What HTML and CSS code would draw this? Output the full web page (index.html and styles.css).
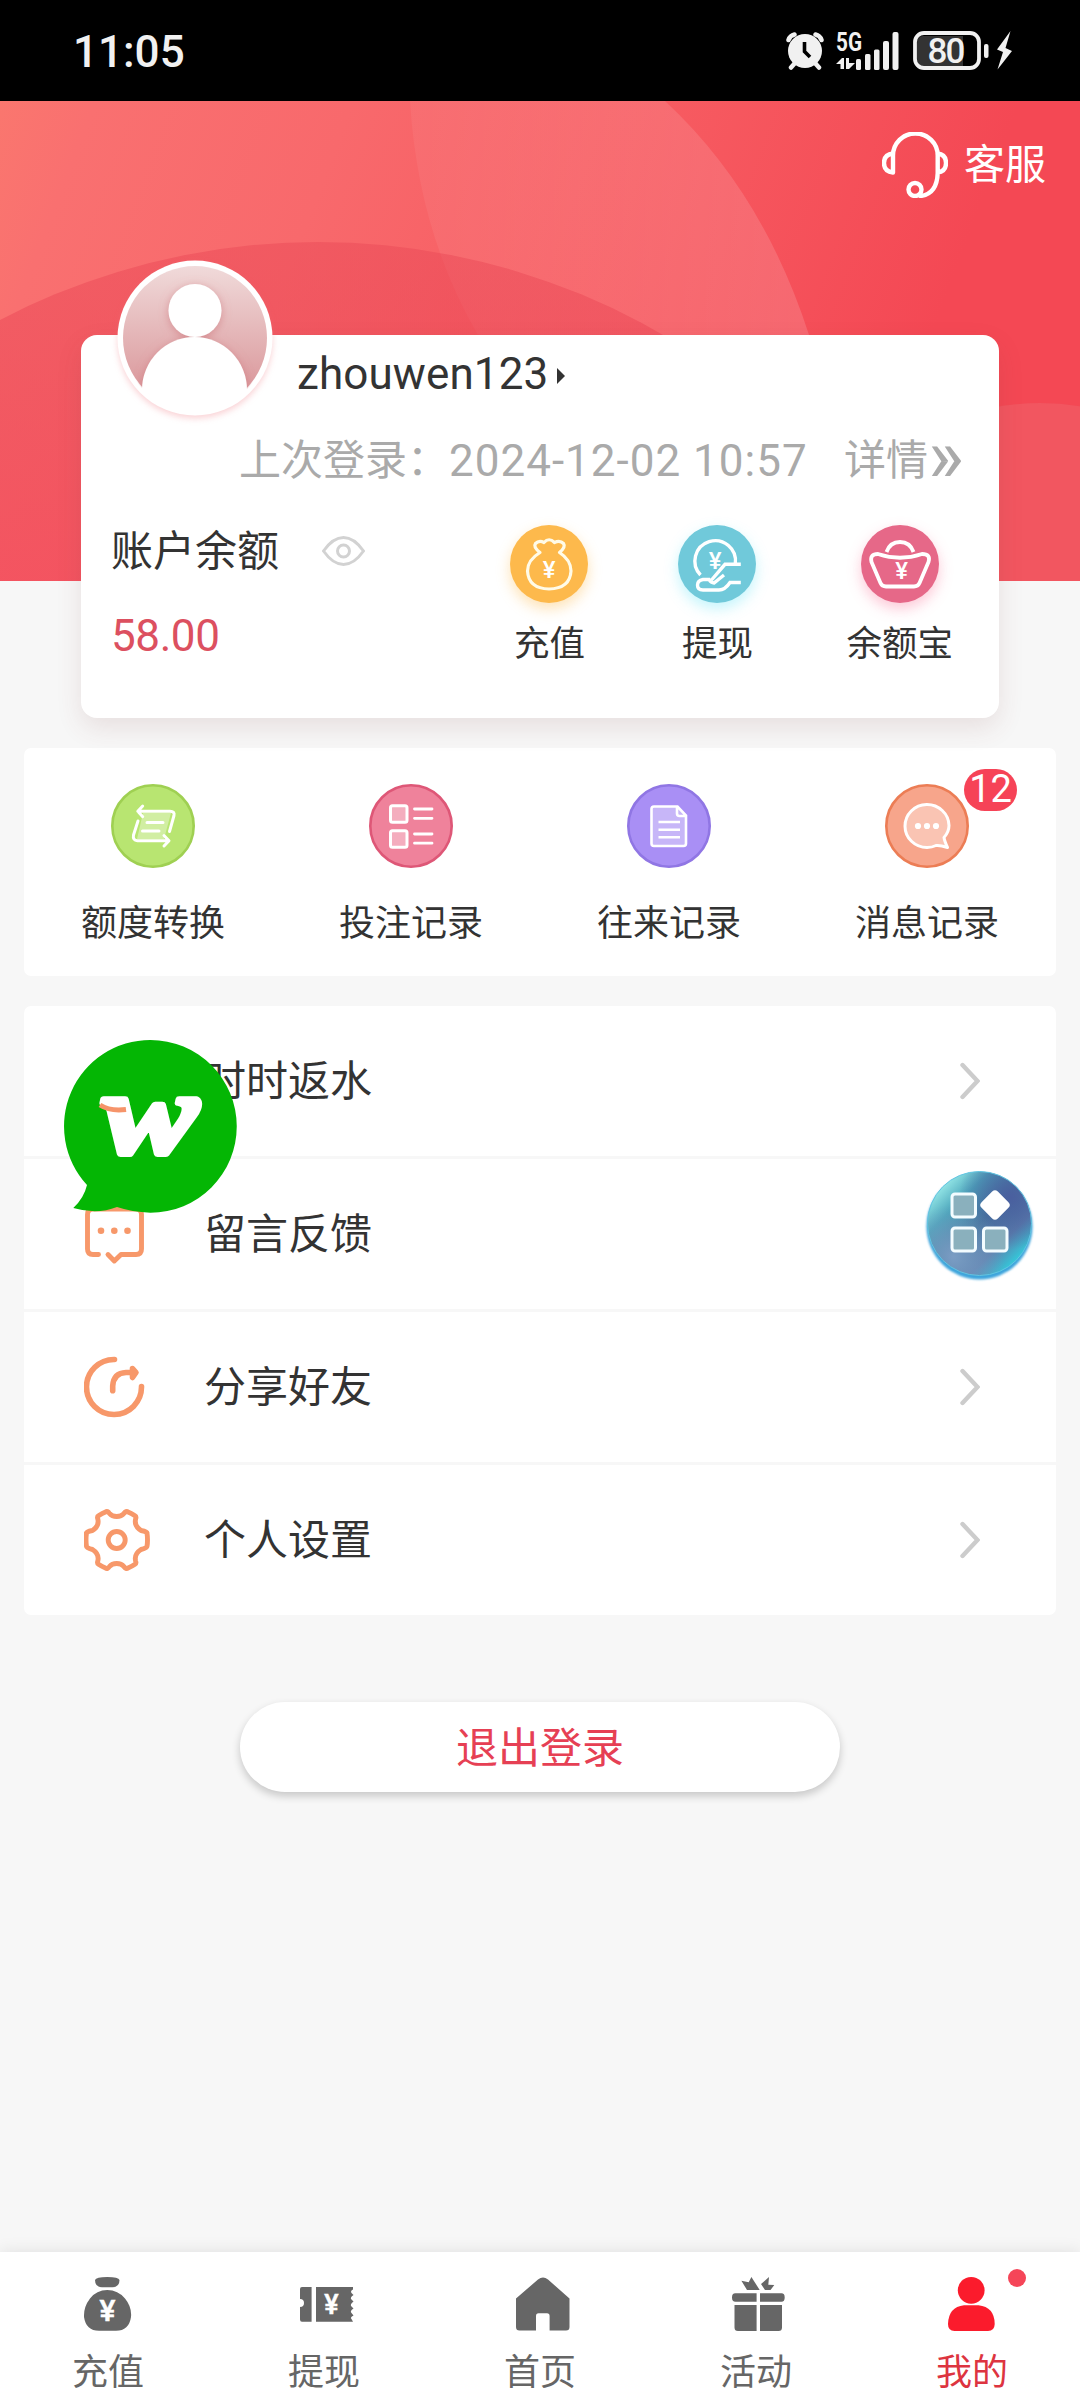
FILE: index.html
```html
<!DOCTYPE html>
<html lang="zh-CN">
<head>
<meta charset="utf-8">
<title>我的</title>
<link rel="stylesheet" href="styles.css">
</head>
<body>
<div class="screen">
  <div class="status">
    <span class="clock">11:05</span>
    <div class="status-icons">
      <svg class="alarm" width="38" height="38" viewBox="0 0 38 38">
        <g stroke="#f1f1f1" stroke-width="4.5" stroke-linecap="round" fill="none"><path d="M2.500 8Q4 3.500 8.500 2.500M35.500 8Q34 3.500 29.500 2.500M9 31L5 35.500M29 31L33 35.500"/></g>
        <circle cx="19" cy="19" r="17" fill="#f1f1f1"/>
        <path d="M18.500 10V19.500L24 25" stroke="#000" stroke-width="3.600" fill="none"/>
      </svg>
      <svg class="signal" width="63" height="50" viewBox="0 -10 63 50">
        <text x="0" y="20" class="net" textLength="26" lengthAdjust="spacingAndGlyphs">5G</text>
        <g fill="#f1f1f1"><path d="M0 33L6 27H8V38H4.500V33ZM10 27H13V32H19L13 38H10Z"/>
        <rect x="20" y="28" width="5" height="11" rx="1.500"/><rect x="29" y="23" width="5.500" height="16" rx="1.500"/><rect x="38" y="18.500" width="5.500" height="20.500" rx="1.500"/><rect x="47" y="10" width="6" height="29" rx="2"/><rect x="56.500" y="1" width="6" height="38" rx="2"/></g>
      </svg>
      <svg class="battery" width="100" height="40" viewBox="0 0 100 40">
        <path d="M10 5H50V35H10Q4 35 4 27V13Q4 5 10 5Z" fill="#333"/>
        <rect x="2" y="2" width="64" height="35" rx="9" fill="none" stroke="#f1f1f1" stroke-width="3.800"/>
        <text x="14.500" y="32" class="level" textLength="38">80</text>
        <rect x="71" y="13" width="4.500" height="14" rx="2" fill="#f1f1f1"/>
        <path d="M97.500 0L84 18.500L90 21L84.500 38.500L99 20L92.500 17Z" fill="#f1f1f1"/>
      </svg>
    </div>
  </div>

  <header class="hero">
    <svg class="hero-bg" width="1080" height="480" viewBox="0 101 1080 480">
      <defs>
        <linearGradient id="base" gradientUnits="userSpaceOnUse" x1="0" y1="80" x2="900" y2="420"><stop offset="0" stop-color="#fa776e"/><stop offset=".1" stop-color="#f97070"/><stop offset=".35" stop-color="#f8696c"/><stop offset=".6" stop-color="#f75e63"/><stop offset="1" stop-color="#f44854"/></linearGradient>
        <linearGradient id="glow" x1="0" y1="0" x2="1" y2="0"><stop offset="0" stop-color="#fff" stop-opacity=".05"/><stop offset="1" stop-color="#fff" stop-opacity=".15"/></linearGradient>
        <linearGradient id="shade" gradientUnits="userSpaceOnUse" x1="0" y1="242" x2="0" y2="580"><stop offset="0" stop-color="#ea4a57" stop-opacity=".5"/><stop offset="1" stop-color="#f24c5c" stop-opacity=".75"/></linearGradient>
      </defs>
      <rect y="101" width="1080" height="480" fill="url(#base)"/>
      <path d="M410 101Q418 232 478 335L560 480H830Q830 400 809 335Q763 192 665 101Z" fill="url(#glow)"/>
      <circle cx="318" cy="930" r="688" fill="url(#shade)"/>
      <circle cx="1040" cy="653" r="250" fill="#f0646c" fill-opacity=".5"/>
    </svg>
    <div class="service">
      <svg width="66" height="66" viewBox="0 0 66 66" fill="none" stroke="#fff" stroke-width="4.400" stroke-linecap="round" stroke-linejoin="round"><path d="M11 40.500V23.500A22.300 22 0 0 1 55.700 23.500V41Q55 62 38.500 64M11 21.500Q2 22.500 2 31T11 40.500M55.700 21.500Q64 22.500 64 31T55.700 40.500"/><circle cx="33" cy="57.500" r="6.500"/></svg>
      <span>客服</span>
    </div>

    <section class="account">
      <svg class="avatar" width="180" height="180" viewBox="0 0 180 180">
        <defs><linearGradient id="face" x1="0" y1="0" x2="0" y2="1"><stop offset="0" stop-color="#f0dada"/><stop offset=".8" stop-color="#dc9da0"/></linearGradient><clipPath id="disc"><circle cx="90" cy="90" r="73"/></clipPath>
        <filter id="soft" x="-30%" y="-30%" width="160%" height="160%"><feDropShadow dx="0" dy="2" stdDeviation="5" flood-color="#c9696f" flood-opacity=".55"/></filter></defs>
        <circle class="avatar-ring" cx="90" cy="90" r="77.500" fill="#fff"/>
        <circle cx="90" cy="90" r="72" fill="url(#face)"/>
        <g clip-path="url(#disc)"><g filter="url(#soft)" fill="#fff"><circle cx="90" cy="62.500" r="26.500"/><path d="M37 172V142A52.500 53 0 0 1 142 142V172Z"/></g></g>
      </svg>
      <div class="user"><span class="name">zhouwen123</span><i class="caret"></i></div>
      <div class="last"><span>上次登录：</span><span class="date">2024-12-02 10:57</span><span class="detail">详情</span><span class="more">»</span></div>
      <div class="money">
        <div class="balance">
          <div class="balance-label"><span>账户余额</span>
            <svg width="43" height="30" viewBox="0 0 43 30" fill="none" stroke="#d2d2d2" stroke-width="3"><path d="M1.500 15Q11 1.500 21.500 1.500T41.500 15Q32 28.500 21.500 28.500T1.500 15Z"/><circle cx="21.500" cy="15" r="6"/></svg>
          </div>
          <div class="amount">58.00</div>
        </div>
        <div class="action">
          <svg class="disc amber" width="78" height="78" viewBox="0 0 78 78"><g fill="none" stroke="#fffbe8" stroke-width="3.200" stroke-linejoin="round"><path d="M30 27.500Q23 22 25.500 18.500Q29 15 34 17.500Q39 12 44.500 17.500Q50 15 53.500 18.500Q56 22 49.500 27.500Q61 35 61 46Q60 63.500 39 64Q18.500 63.500 17.500 46Q17.500 35 30 27.500Z"/></g><text x="39" y="53" class="yen">¥</text></svg>
          <span>充值</span>
        </div>
        <div class="action">
          <svg class="disc cyan" width="78" height="78" viewBox="0 0 78 78"><path d="M22.500 50A20.300 20.300 0 1 1 57.300 39M62.800 39.300H47L33.500 55M46 50L36 58Q33 58 31 54.500H25Q19.500 55.500 19.500 60Q19.500 65 25 65H41Q47 65 52 57.500H62.800" fill="none" stroke="#fff" stroke-width="3.400"/><text x="37" y="43.500" class="yen">¥</text></svg>
          <span>提现</span>
        </div>
        <div class="action">
          <svg class="disc rose" width="78" height="78" viewBox="0 0 78 78"><path d="M25.500 27Q29 17 39 17T52.500 27M17 29Q39 36.500 61 29Q70 29 67.500 37L58.500 58Q57 61.500 53 61.500H25Q21 61.500 19.500 58L10.500 37Q8.500 29 17 29Z" fill="none" stroke="#fff" stroke-width="3.800" stroke-linejoin="round"/><text x="40.500" y="54" class="yen">¥</text></svg>
          <span>余额宝</span>
        </div>
      </div>
    </section>
  </header>

  <section class="quick">
    <div class="entry">
      <svg width="84" height="84" viewBox="0 0 84 84"><circle cx="42" cy="42" r="40.700" fill="#b8e571" stroke="#9fd052" stroke-width="2.600"/><path d="M32 29H60L53 55H26Z" fill="#fff" fill-opacity=".35"/><path d="M27 27.300H59Q64 27.300 63 31.500L58.500 47.500M31.700 22L26.800 27.300L31.700 32.700M27 37L22.500 51Q21.500 56.500 26.500 56.700H57.500M53 51.500L58 56.700L53 62M36 38.500H52M31.500 47H48" fill="none" stroke="#fff" stroke-width="3" stroke-linecap="round" stroke-linejoin="round"/></svg>
      <span>额度转换</span>
    </div>
    <div class="entry">
      <svg width="84" height="84" viewBox="0 0 84 84"><circle cx="42" cy="42" r="40.700" fill="#ef829b" stroke="#de5777" stroke-width="2.600"/><g fill="#fff" fill-opacity=".35" stroke="#fff" stroke-width="3"><rect x="21.500" y="21.800" width="16.500" height="16.500" rx="2"/><rect x="21.500" y="46.700" width="16.500" height="16.500" rx="2"/></g><path d="M45.500 25H63M45.500 34.300H63M45.500 50H63M45.500 59.200H63" stroke="#fff" stroke-width="2.800" stroke-linecap="round"/></svg>
      <span>投注记录</span>
    </div>
    <div class="entry">
      <svg width="84" height="84" viewBox="0 0 84 84"><circle cx="42" cy="42" r="40.700" fill="#a98ff5" stroke="#9076e4" stroke-width="2.600"/><path d="M27 22.500H50.500L59 31.500V59.500Q59 62 56.500 62H27Q24.500 62 24.500 59.500V25Q24.500 22.500 27 22.500Z" fill="#fff" fill-opacity=".35"/><path d="M27 22.500H50.500L59 31.500V59.500Q59 62 56.500 62H27Q24.500 62 24.500 59.500V25Q24.500 22.500 27 22.500ZM50 23V29.500Q50 32 52.500 32H59M31.500 38H53M31.500 45.700H53M31.500 53.300H53" fill="none" stroke="#fff" stroke-width="2.600"/></svg>
      <span>往来记录</span>
    </div>
    <div class="entry">
      <svg width="84" height="84" viewBox="0 0 84 84"><circle cx="42" cy="42" r="40.700" fill="#f7a58b" stroke="#ec7d55" stroke-width="2.600"/><path d="M59 53.500Q64 48 64 41.500A22 21.500 0 1 0 42 63.500Q47 63.500 51 61.500Q55 61 62.500 63.500Q59.500 57 59 53.500Z" fill="#fff" fill-opacity=".35" stroke="#fff" stroke-width="3" stroke-linejoin="round"/><g fill="#fff"><circle cx="33" cy="42" r="3.100"/><circle cx="42" cy="42" r="3.100"/><circle cx="51" cy="42" r="3.100"/></g></svg>
      <span>消息记录</span>
      <b class="badge">12</b>
    </div>
  </section>

  <section class="menu">
    <div class="row">
      <svg class="lead" width="66" height="66" viewBox="0 0 66 66"><circle cx="33" cy="35" r="29"/><path d="M14 22Q26 29.500 45 25"/></svg>
      <span>时时返水</span>
      <svg class="go" width="20" height="38" viewBox="0 0 20 38"><path d="M2.500 3L17.500 19L2.500 35"/></svg>
    </div>
    <div class="row">
      <svg class="lead" width="66" height="66" viewBox="0 0 66 66"><path d="M14.500 53.500H9Q3.500 53.500 3.500 48V13.500Q3.500 8 9 8H52Q57.500 8 57.500 13.500V48Q57.500 53.500 52 53.500H37L30.300 60L24 53.500"/><g class="dots"><circle cx="17" cy="29.700" r="3.300"/><circle cx="30.300" cy="29.700" r="3.300"/><circle cx="43.500" cy="29.700" r="3.300"/></g></svg>
      <span>留言反馈</span>
      <svg class="go" width="20" height="38" viewBox="0 0 20 38"><path d="M2.500 3L17.500 19L2.500 35"/></svg>
    </div>
    <div class="row">
      <svg class="lead wide" width="66" height="66" viewBox="0 0 66 66"><path d="M30.500 5.500A27.500 27.500 0 1 0 57.500 32.500M28.700 36.700V32Q29.500 19 42 18.500H49"/><path class="solid" d="M48.500 14.500L52 18.500L48.500 23.500Z"/></svg>
      <span>分享好友</span>
      <svg class="go" width="20" height="38" viewBox="0 0 20 38"><path d="M2.500 3L17.500 19L2.500 35"/></svg>
    </div>
    <div class="row">
      <svg class="lead" width="66" height="66" viewBox="0 0 66 66"><path d="M2.500 26Q2.500 24.500 8.500 23.500Q15.500 19 13.800 12Q13 9.500 14.500 8.800Q18 6.500 21.500 5Q23.500 3.500 25.500 6.500Q28 9.500 32.700 9.500T39.900 6.500Q42 3.500 44 5Q47.500 6.500 51 8.800Q52.500 9.500 51.600 12Q50 19 57 23.500Q63 24.500 63 26Q64 33 63 39.500Q63 41 57 42.500Q50 47 51.600 54Q52.500 56.500 51 57.200Q47.500 59.500 44 61Q42 62.500 39.900 59.500Q37.500 56.500 32.700 56.500T25.500 59.500Q23.500 62.500 21.500 61Q18 59.500 14.500 57.200Q13 56.500 13.800 54Q15.500 47 8.500 42.500Q2.500 41 2.500 39.500Q1.500 33 2.500 26Z"/><circle cx="32.700" cy="33" r="8.500"/></svg>
      <span>个人设置</span>
      <svg class="go" width="20" height="38" viewBox="0 0 20 38"><path d="M2.500 3L17.500 19L2.500 35"/></svg>
    </div>
    <svg class="bubble" width="174" height="174" viewBox="0 0 174 174">
      <path d="M86.400 0A86.350 86.350 0 0 1 86.400 172.700Q68 172 53 167Q33 175 9.300 168Q20 158 23 145A86.350 86.350 0 0 1 86.400 0Z" fill="#04b604"/>
      <text x="39" y="113" class="mark" textLength="95" lengthAdjust="spacingAndGlyphs">w</text>
      <path d="M36 65Q46 71.500 62 69.500" fill="none" stroke="#f6946a" stroke-width="5"/>
    </svg>
    <svg class="orb" width="112" height="114" viewBox="0 0 112 114">
      <defs>
        <linearGradient id="orb-base" x1=".1" y1=".1" x2=".9" y2=".9"><stop offset="0" stop-color="#a4f5f0"/><stop offset=".25" stop-color="#4ba5bb"/><stop offset=".5" stop-color="#44789d"/><stop offset=".75" stop-color="#5c7fad"/><stop offset="1" stop-color="#28dce6"/></linearGradient>
        <radialGradient id="orb-a" cx=".8" cy=".25" r=".5"><stop offset="0" stop-color="#4a5f9f"/><stop offset="1" stop-color="#4a5f9f" stop-opacity="0"/></radialGradient>
        <radialGradient id="orb-b" cx=".25" cy=".82" r=".5"><stop offset="0" stop-color="#7b9dc4"/><stop offset="1" stop-color="#7b9dc4" stop-opacity="0"/></radialGradient>
        <filter id="orb-soft" x="-20%" y="-20%" width="140%" height="140%"><feGaussianBlur stdDeviation="1.200"/></filter>
      </defs>
      <circle cx="55.500" cy="57.500" r="53" fill="#3da4dc" filter="url(#orb-soft)"/>
      <circle cx="55.500" cy="54.500" r="52" fill="url(#orb-base)"/><circle cx="55.500" cy="54.500" r="52" fill="url(#orb-a)"/><circle cx="55.500" cy="54.500" r="52" fill="url(#orb-b)" stroke="#61c5e2" stroke-width="1"/>
      <g fill="#8ab0bd" stroke="#f3fcff" stroke-width="3"><rect x="28" y="25" width="23.500" height="23" rx="3"/><rect x="28" y="59" width="23.500" height="23" rx="3"/><rect x="59.500" y="59" width="23.500" height="23" rx="3"/></g>
      <rect x="59.500" y="24.500" width="23" height="23" rx="4" fill="#fff" transform="rotate(45 71 36)"/>
    </svg>
  </section>

  <button class="logout">退出登录</button>

  <nav class="tabs">
    <div class="tab"><svg width="60" height="60" viewBox="0 0 60 60"><path d="M17 6Q18 3 29.300 3T41.500 6Q41.500 13.300 34.500 13.300H24Q17 13.300 17 6ZM29.300 16Q40 16 47 24.500T53 43Q51 56.800 38 56.800H21Q8 56.800 6 43Q5.500 33 12 24.500T29.300 16Z"/><text x="29.500" y="47" class="yen-tab">¥</text></svg><span>充值</span></div>
    <div class="tab"><svg width="60" height="60" viewBox="0 0 60 60"><path d="M8 13H17.600V47.700H8Q6 47.700 6 45.500V33A4 4 0 0 0 6 25V15Q6 13 8 13ZM22 13H59V15.500Q56 17 57.500 19L59.500 21Q55.500 23.500 57.500 25.500L59.500 27.500Q55.500 30.500 57.500 32.500L59.500 34.500Q55.500 37 57.500 39L59.500 41.500Q55.500 43.500 57.500 45L59 47.700H22Z"/><text x="37.500" y="40" class="yen-tab small">¥</text></svg><span>提现</span></div>
    <div class="tab"><svg width="60" height="60" viewBox="0 0 60 60"><path d="M28 5.500Q33 1.500 38 5.500L59.500 24.500V53Q59.500 56.500 56 56.500H39.600V42Q39.600 39.300 37 39.300H28.500Q26 39.300 26 42V56.500H9.500Q6 56.500 6 53V24.500Z"/></svg><span>首页</span></div>
    <div class="tab"><svg width="60" height="60" viewBox="0 0 60 60"><path d="M15.400 6.700L22.700 8.300L25.400 3L33.700 16H21ZM35 10L43 3L42.300 10.700L48.300 11L44.500 16H39ZM9.500 19.300H30.600V27.800H9.500Q6 27.800 6 23.500T9.500 19.300ZM34 19.300H55.500Q58.700 19.300 58.700 23.500T55.500 27.800H34ZM8.500 31H30.600V57H12Q8.500 57 8.500 53.500ZM34 31H56V53.500Q56 57 52.500 57H34Z"/></svg><span>活动</span></div>
    <div class="tab on"><svg width="60" height="60" viewBox="0 0 60 60"><circle cx="29.200" cy="16.300" r="13.400"/><path d="M22 31.300H36.500Q52.500 33 52.700 50Q52.500 57 46 57H12.500Q6 57 6 50Q6.500 33 22 31.300Z"/></svg><span>我的</span><i class="dot"></i></div>
  </nav>
</div>
</body>
</html>
```
FILE: styles.css
```css
* { box-sizing: border-box; }
body {
  margin: 0;
  background: #f7f7f7;
  color: #333;
  font-family: Roboto, "Noto Sans CJK SC", sans-serif;
}
svg { display: block; flex: none; }
.screen {
  display: flex;
  flex-direction: column;
  width: 1080px;
  height: 2400px;
  overflow: hidden;
}

/* Status bar */
.status {
  display: flex;
  justify-content: space-between;
  height: 101px;
  padding: 0 67px 0 73px;
  background: #000;
  color: #f1f1f1;
}
.clock { font-size: 44px; font-weight: 500; line-height: 104px; }
.status-icons { display: flex; padding-top: 31px; }
.alarm { margin: 1px 12px 0 0; }
.signal { margin: -10px 14px 0 0; }
.net { font-size: 26px; font-weight: 700; fill: #f1f1f1; }
.level { font-size: 35px; font-weight: 500; fill: #f1f1f1; }

/* Header and account card */
.hero { position: relative; height: 617px; flex: none; }
.hero-bg { position: absolute; left: 0; top: 0; }
.service {
  position: relative;
  display: flex;
  align-items: center;
  justify-content: flex-end;
  gap: 16px;
  height: 127px;
  padding-right: 34px;
  color: #fff;
  font-size: 41px;
  line-height: 48px;
}
.account {
  position: relative;
  width: 918px;
  height: 383px;
  margin: 107px auto 0;
  border-radius: 16px;
  background: #fff;
  box-shadow: 0 10px 26px rgba(120, 60, 60, .12);
}
.avatar { position: absolute; left: 24px; top: -87px; }
.avatar-ring { filter: drop-shadow(0 3px 3px rgba(240, 110, 120, .3)); }
.user { display: flex; align-items: center; height: 78px; padding-left: 216px; }
.name { font-size: 44px; letter-spacing: .1px; }
.caret {
  margin: 4px 0 0 9px;
  border: 8px solid transparent;
  border-left-color: #333;
  border-right-width: 0;
}
.last {
  display: flex;
  align-items: center;
  height: 92px;
  padding: 3px 0 0 158px;
  color: #aaa;
  font-size: 42px;
  line-height: 92px;
  white-space: nowrap;
}
.date { width: 395px; font-size: 44px; letter-spacing: 1px; }
.more { height: 92px; font-size: 76px; line-height: 82px; }
.money { display: flex; gap: 90px; padding: 0 46px 0 30px; }
.balance { flex: 1; }
.balance-label { display: flex; align-items: center; gap: 43px; height: 90px; font-size: 42px; }
.balance-label span { padding-bottom: 5px; }
.balance-label svg { margin-top: 2px; }
.amount { color: #dc5060; font-size: 44px; line-height: 83px; letter-spacing: -.4px; }
.action {
  display: flex;
  flex-direction: column;
  align-items: center;
  padding-top: 20px;
  font-size: 35.5px;
  line-height: 50px;
}
.action span { margin-top: 16px; }
.disc { border-radius: 50%; }
.amber { background: #fdb94c; box-shadow: 0 6px 14px rgba(253, 185, 76, .4); }
.cyan { background: #70c9da; box-shadow: 0 6px 14px rgba(90, 225, 245, .35); }
.rose { background: #e66888; box-shadow: 0 6px 14px rgba(250, 100, 140, .35); }
.yen { font-size: 24px; font-weight: 500; fill: #fff; text-anchor: middle; }

/* Shortcut entries */
.quick {
  display: grid;
  grid-template-columns: repeat(4, 1fr);
  flex: none;
  height: 228px;
  margin: 30px 24px 0;
  border-radius: 7px;
  background: #fff;
}
.entry {
  position: relative;
  display: flex;
  flex-direction: column;
  align-items: center;
  padding-top: 36px;
  font-size: 36px;
  line-height: 50px;
}
.entry span { margin-top: 31px; }
.badge {
  position: absolute;
  left: 166px;
  top: 21px;
  width: 53px;
  height: 42px;
  border-radius: 21px;
  background: #f64357;
  color: #fff;
  font-size: 38px;
  font-weight: 400;
  line-height: 41px;
  text-align: center;
}

/* Menu list */
.menu {
  position: relative;
  display: grid;
  grid-template-rows: repeat(4, 150px);
  gap: 3px;
  flex: none;
  margin: 30px 24px 0;
}
.row {
  display: flex;
  align-items: center;
  padding: 0 76px 0 60px;
  background: #fff;
  font-size: 42px;
}
.row:first-child { border-radius: 7px 7px 0 0; }
.row:nth-child(4) { border-radius: 0 0 7px 7px; }
.row span { flex: 1; margin-left: 54px; padding-bottom: 7px; }
.lead { fill: none; stroke: #f7986a; stroke-width: 4.9; stroke-linecap: round; stroke-linejoin: round; }
.wide { stroke-width: 5.6; }
.dots { fill: #f7986a; stroke: none; }
.solid { fill: #f7986a; }
.go { fill: none; stroke: #ccc; stroke-width: 4.4; stroke-linecap: round; }
.bubble { position: absolute; left: 40px; top: 34px; }
.mark {
  fill: #fff;
  stroke: #fff;
  stroke-width: 6;
  stroke-linejoin: round;
  font: italic 700 116px "Liberation Serif", serif;
}
.orb { position: absolute; left: 900px; top: 163px; }

.logout {
  flex: none;
  align-self: center;
  width: 600px;
  height: 90px;
  margin-top: 87px;
  padding: 4px 0 0;
  border: 0;
  border-radius: 45px;
  background: #fff;
  box-shadow: 0 4px 9px rgba(0, 0, 0, .2);
  color: #e64054;
  font: 42px/86px Roboto, "Noto Sans CJK SC", sans-serif;
}

/* Bottom tabs */
.tabs {
  display: grid;
  grid-template-columns: repeat(5, 1fr);
  height: 148px;
  margin-top: auto;
  background: #fff;
  box-shadow: 0 0 16px rgba(0, 0, 0, .1);
}
.tab {
  position: relative;
  display: flex;
  flex-direction: column;
  align-items: center;
  gap: 14px;
  padding-top: 22px;
  color: #666;
  fill: #666;
  font-size: 36px;
  line-height: 50px;
}
.on { color: #dd3440; fill: #fb1b2c; }
.yen-tab { font-size: 30px; font-weight: 500; fill: #fff; stroke: #fff; stroke-width: .5; text-anchor: middle; }
.small { font-size: 27px; }
.dot {
  position: absolute;
  left: 144px;
  top: 17px;
  width: 18px;
  height: 18px;
  border-radius: 50%;
  background: #f54558;
}
```
